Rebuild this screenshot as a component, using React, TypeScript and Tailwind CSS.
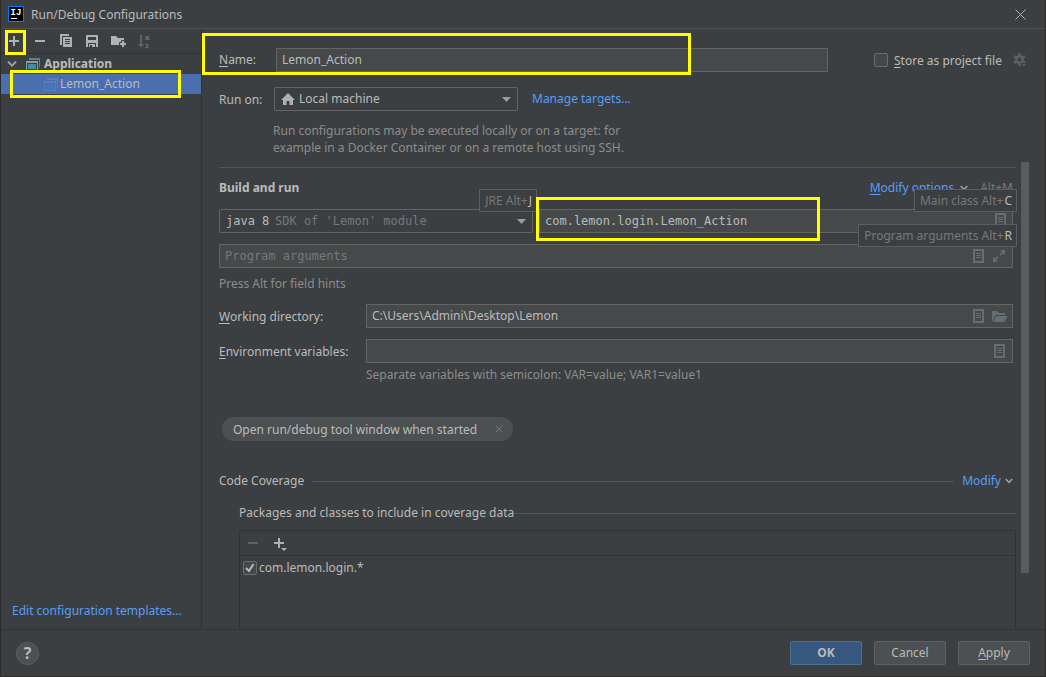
import type { ReactNode } from 'react'

const fieldClass =
  'h-6 w-full min-w-0 border border-[#646464] bg-[#45494a] px-[5px] pb-px text-[#bbbbbb] outline-none'
const linkClass = 'text-[#589df6] hover:underline'
const monoClass = "font-['DejaVu_Sans_Mono',monospace] text-xs"

function Mnemonic({ text }: { text: string }) {
  return (
    <span className="whitespace-nowrap">
      <span className="underline underline-offset-2">{text[0]}</span>
      {text.slice(1)}
    </span>
  )
}

function Highlight({ className }: { className: string }) {
  return <div className={`pointer-events-none absolute z-20 border-3 border-[#ffff00] ${className}`} />
}

function FieldHint({ label, hotkey }: { label: string; hotkey: string }) {
  return (
    <div className="pointer-events-none absolute -top-5 -right-1 z-10 flex h-[23px] items-center border border-[#5b5d5f] bg-[#3c3f41] pr-1 pl-[5px] whitespace-nowrap text-[#787878]">
      {label} Alt+<span className="ml-px text-[#bbbbbb]">{hotkey}</span>
    </div>
  )
}

function DocIcon() {
  return (
    <svg className="h-3.5 w-[11px]" viewBox="0 0 11 14" shapeRendering="crispEdges">
      <path fill="none" stroke="#646d72" strokeWidth="2" d="M1 1h9v12H1z" />
      <path fill="#646d72" d="M3 4h5v1H3zM3 6h5v1H3zM3 8h5v1H3z" />
    </svg>
  )
}

function ExpandIcon() {
  return (
    <svg className="h-3.5 w-3.5" viewBox="0 0 14 14">
      <path fill="#646d72" d="M8 1h5v5l-1.700-1.700L8.800 6.800 7.500 5.500 10 3zM1 13V8l1.700 1.700L5.200 7.200l1.300 1.300L4 11l2 2z" />
    </svg>
  )
}

function FolderIcon() {
  return (
    <svg className="h-3.5 w-4" viewBox="0 0 16 14">
      <path fill="#646d72" d="M0 2h5l2 2h6v2H3.500L1 12H0z" />
      <path fill="#646d72" d="M4 7h11.500L12.500 13H1.500z" />
    </svg>
  )
}

function WindowIcon({ dim }: { dim?: boolean }) {
  return (
    <svg className="h-[13px] w-3.5 shrink-0" viewBox="0 0 14 13" shapeRendering="crispEdges">
      <path fill={dim ? '#5f7db8' : '#6e7a80'} d="M3 0h11v10h-1V2H3z" />
      <path fill={dim ? '#5f7db8' : '#8d9aa2'} d="M0 3h12v10H0zM1 5v7h10V5z" fillRule="evenodd" />
      <path fill={dim ? '#3f78bf' : '#3e8ea8'} d="M2 6h8v5H2z" />
    </svg>
  )
}

function Chevron({ className }: { className?: string }) {
  return (
    <svg className={`shrink-0 ${className ?? 'size-2'}`} viewBox="0 0 8 8">
      <path fill="none" stroke="#9a9da0" strokeWidth="1.600" d="M.7 2 4 5.300 7.300 2" />
    </svg>
  )
}

function SelectArrow() {
  return (
    <svg className="pointer-events-none absolute top-[10px] right-[7px] h-[5px] w-[9px]" viewBox="0 0 9 5">
      <path fill="#9a9da0" d="M0 0h9L4.500 5z" />
    </svg>
  )
}

function ToolButton({ label, children }: { label: string; children: ReactNode }) {
  return (
    <button type="button" aria-label={label} className="flex size-4 items-center justify-center">
      <svg className="size-4" viewBox="0 0 16 16">
        {children}
      </svg>
    </button>
  )
}

function Sidebar() {
  return (
    <aside className="flex w-[201px] shrink-0 flex-col border-r border-[#323232]">
      <div className="relative flex h-[25px] items-center gap-[10px] border-b border-[#323232] pl-[5px]">
        <ToolButton label="Add">
          <path fill="#afb1b3" d="M7 3h2v4h4v2H9v4H7V9H3V7h4z" />
        </ToolButton>
        <ToolButton label="Remove">
          <path fill="#afb1b3" d="M3 7h10v2H3z" />
        </ToolButton>
        <ToolButton label="Copy">
          <path fill="#afb1b3" d="M2 1h9v2H4v9H2z" />
          <path fill="#afb1b3" fillRule="evenodd" d="M5 4h9v10H5zM7 6v1h5V6zM7 8v1h5V8zM7 10v1h5v-1z" />
        </ToolButton>
        <ToolButton label="Save">
          <path fill="#afb1b3" fillRule="evenodd" d="M2 2h12v12h-2v-4H4v4H2zM4 4v3h8V4zM5 11h6v3H8v-2H6v2H5z" />
        </ToolButton>
        <ToolButton label="New folder">
          <path fill="#afb1b3" d="M1 3h5l2 2h6v4h-3v3H1z" />
          <path fill="#afb1b3" stroke="#3c3f41" d="M11.500 7.500h3v2h2v3h-2v2h-3v-2h-2v-3h2z" />
        </ToolButton>
        <ToolButton label="Sort">
          <path fill="#5e6163" d="M4 2h2v9h2.500L5 14.500 1.500 11H4z" />
          <text x="9" y="7" fontFamily="Liberation Sans" fontSize="8" fontWeight="bold" fill="#6e7173">a</text>
          <text x="9" y="15" fontFamily="Liberation Sans" fontSize="8" fontWeight="bold" fill="#6e7173">z</text>
        </ToolButton>
        <Highlight className="top-px left-1 h-[25px] w-[21px]" />
      </div>

      {/* Configuration tree */}
      <div className="flex h-5 items-center pl-[6px] font-bold">
        <Chevron className="mr-[9px] size-[10px]" />
        <WindowIcon />
        <span className="ml-1">Application</span>
      </div>
      <div className="relative flex h-5 items-center bg-[#4b6eaf] pl-[43px]">
        <WindowIcon dim />
        <span className="ml-0.5">Lemon_Action</span>
        <Highlight className="-top-1 left-[9px] h-7 w-[171px]" />
      </div>

      <a href="#templates" className={`mt-auto mb-2 ml-[11px] leading-5 whitespace-nowrap ${linkClass}`}>
        Edit configuration templates...
      </a>
    </aside>
  )
}

function ConfigHeader() {
  return (
    <div className="pt-[19px] pr-[18px] pl-[17px]">
      <div className="relative flex h-6 items-center">
        <label htmlFor="name" className="w-[57px] shrink-0">
          <Mnemonic text="Name:" />
        </label>
        <input id="name" className={fieldClass} defaultValue="Lemon_Action" />
        <div className="ml-[46px] flex w-[153px] shrink-0 items-center">
          <input
            id="store"
            type="checkbox"
            className="size-3.5 shrink-0 appearance-none rounded-xs border border-[#6b6b6b] bg-[#43494a]"
          />
          <label htmlFor="store" className="ml-1.5 pt-0.5">
            <Mnemonic text="Store as project file" />
          </label>
          <button type="button" aria-label="Storage settings" className="ml-auto">
            <svg className="size-3.5" viewBox="0 0 14 14">
              <circle cx="6.500" cy="6.500" r="3.200" fill="none" stroke="#5e6163" strokeWidth="2.600" />
              <path stroke="#5e6163" strokeWidth="2.600" d="M6.500 0v2.500M6.500 10.500V13M.9 3.200l2.100 1.300M10 8.500l2.100 1.300M.9 9.800 3 8.500M10 4.500l2.100-1.300" />
              <path fill="#5e6163" stroke="#3c3f41" d="M8 10.500h6L11 14z" />
            </svg>
          </button>
        </div>
        <Highlight className="-top-[15px] -left-[17px] h-[42px] w-[489px]" />
      </div>

      <div className="mt-[15px] flex h-6 items-center">
        <label htmlFor="run-on" className="w-[55px] shrink-0 pt-0.5 whitespace-nowrap">
          Run on:
        </label>
        <div className="relative w-[244px]">
          <select
            id="run-on"
            className="block h-6 w-full appearance-none rounded-xs border border-[#646464] bg-[#3c3f41] pl-6 outline-none"
          >
            <option>Local machine</option>
          </select>
          <svg className="pointer-events-none absolute top-[6px] left-[7px] h-3 w-3.5" viewBox="0 0 14 12">
            <path fill="#afb1b3" d="M7 0l7 7h-2v5H8.500V8h-3v4H2V7H0z" />
          </svg>
          <SelectArrow />
        </div>
        <a href="#targets" className={`ml-[14px] ${linkClass}`}>
          Manage targets...
        </a>
      </div>
      <p className="mt-[11px] ml-[54px] w-[380px] leading-[17px] text-[#8c8c8c]">
        Run configurations may be executed locally or on a target: for
        <br />
        example in a Docker Container or on a remote host using SSH.
      </p>
    </div>
  )
}

function BuildAndRun() {
  return (
    <section className="mr-[3px]">
      <div className="mt-2 flex h-6 items-center">
        <h2 className="font-bold">Build and run</h2>
        <a href="#options" className={`ml-auto ${linkClass}`}>
          <Mnemonic text="Modify options" />
        </a>
        <Chevron className="mr-3 ml-1.5 size-2" />
        <span className="text-[#787878]">Alt+M</span>
      </div>

      <div className="mt-[9px] flex gap-[6px]">
        <div className="relative w-[314px] shrink-0">
          <select
            aria-label="JRE"
            className={`block h-6 w-full appearance-none rounded-xs border border-[#646464] bg-[#3c3f41] pl-1.5 outline-none ${monoClass}`}
          >
            <option>java 8</option>
          </select>
          <span className={`pointer-events-none absolute inset-y-0 left-14 flex items-center text-[#787878] ${monoClass}`}>
            SDK of 'Lemon' module
          </span>
          <SelectArrow />
          <FieldHint label="JRE" hotkey="J" />
        </div>
        <div className="relative flex-1">
          <input aria-label="Main class" className={`block ${fieldClass} ${monoClass} text-[#a9b7c6]`} defaultValue="com.lemon.login.Lemon_Action" />
          <span className="absolute top-1 right-[7px]">
            <DocIcon />
          </span>
          <FieldHint label="Main class" hotkey="C" />
          <Highlight className="-top-3 -left-[3px] h-11 w-[284px]" />
        </div>
      </div>

      <div className="relative mt-[11px]">
        <input
          aria-label="Program arguments"
          placeholder="Program arguments"
          className={`block ${fieldClass} ${monoClass} placeholder:text-[#787878]`}
        />
        <div className="absolute top-[5px] right-[7px] flex gap-2">
          <DocIcon />
          <ExpandIcon />
        </div>
        <FieldHint label="Program arguments" hotkey="R" />
      </div>
      <p className="mt-[6px] leading-5 text-[#8c8c8c]">Press Alt for field hints</p>

      <div className="mt-[10px] flex items-center">
        <label htmlFor="workdir" className="w-[147px] shrink-0 pt-0.5">
          <Mnemonic text="Working directory:" />
        </label>
        <div className="relative flex-1">
          <input id="workdir" className={`block ${fieldClass}`} defaultValue="C:\Users\Admini\Desktop\Lemon" />
          <div className="absolute top-[5px] right-[5px] flex gap-2">
            <DocIcon />
            <FolderIcon />
          </div>
        </div>
      </div>
      <div className="mt-[11px] flex items-center">
        <label htmlFor="env" className="w-[147px] shrink-0 pt-0.5">
          <Mnemonic text="Environment variables:" />
        </label>
        <div className="relative flex-1">
          <input id="env" className={`block ${fieldClass}`} />
          <span className="absolute top-[5px] right-2">
            <DocIcon />
          </span>
        </div>
      </div>
      <p className="mt-0.5 ml-[147px] leading-5 text-[#8c8c8c]">
        Separate variables with semicolon: VAR=value; VAR1=value1
      </p>

      <div className="mt-8 ml-[3px] flex h-6 w-[291px] items-center rounded-full bg-[#4c5052] pr-[10px] pl-[11px] whitespace-nowrap">
        <span className="pt-0.5">Open run/debug tool window when started</span>
        <button type="button" aria-label="Remove option" className="ml-auto">
          <svg className="size-2" viewBox="0 0 8 8">
            <path stroke="#75797b" d="M.5.5l7 7M7.500.5l-7 7" />
          </svg>
        </button>
      </div>
    </section>
  )
}

function CodeCoverage() {
  return (
    <section className="flex min-h-0 flex-1 flex-col">
      <div className="mt-[30px] mr-[3px] flex h-5 items-center">
        <h2>Code Coverage</h2>
        <div className="mx-2 h-px flex-1 bg-[#515557]" />
        <a href="#modify" className={linkClass}>
          Modify
        </a>
        <Chevron className="ml-1 size-2" />
      </div>
      <div className="mt-3 ml-5 flex h-5 items-center">
        <h3>Packages and classes to include in coverage data</h3>
        <div className="h-px flex-1 bg-[#515557]" />
      </div>
      <div className="mt-[7px] ml-5 flex-1 border border-b-0 border-[#323232]">
        <div className="flex h-[25px] items-center gap-[11px] border-b border-[#323232] pl-[5px]">
          <ToolButton label="Remove pattern">
            <path fill="#5e6163" d="M3 7h10v2H3z" />
          </ToolButton>
          <ToolButton label="Add pattern">
            <path fill="#afb1b3" d="M6 3h2v4h4v2H8v4H6V9H2V7h4z" />
            <path fill="#afb1b3" d="M9 13h6l-3 3z" />
          </ToolButton>
        </div>
        <label className="flex h-6 items-center pl-[3px]">
          <span className="relative flex">
            <input
              type="checkbox"
              defaultChecked
              className="peer size-3.5 appearance-none rounded-xs border border-[#6b6b6b] bg-[#43494a]"
            />
            <svg className="pointer-events-none absolute inset-0 hidden size-3.5 peer-checked:block" viewBox="0 0 14 14">
              <path fill="none" stroke="#bbbbbb" strokeWidth="2" d="M3 7l3 3 4.500-7" />
            </svg>
          </span>
          <span className="ml-0.5">com.lemon.login.*</span>
        </label>
      </div>
    </section>
  )
}

export default function App() {
  return (
    <div className="flex h-screen flex-col overflow-hidden border-x border-b border-[#2b2b2b] bg-[#3c3f41] font-['Noto_Sans',sans-serif] text-xs leading-5 text-[#bbbbbb]">
      <header className="flex h-[29px] shrink-0 items-center border-b border-[#515151] pr-[19px] pl-[7px]">
        <svg className="size-4" viewBox="0 0 16 16">
          <path fill="#000" stroke="#087cfa" d="M.5.5h15v15H.5z" />
          <text x="2.500" y="9" fontFamily="Liberation Mono" fontWeight="bold" fontSize="9" fill="#fff">IJ</text>
          <path fill="#fff" d="M3 12h6v1H3z" />
        </svg>
        <h1 className="ml-[7px] pt-0.5">Run/Debug Configurations</h1>
        <button type="button" aria-label="Close" className="ml-auto">
          <svg className="size-[11px]" viewBox="0 0 11 11">
            <path stroke="#afb1b3" d="M.5.5l10 10M10.500.5l-10 10" />
          </svg>
        </button>
      </header>

      <div className="flex min-h-0 flex-1">
        <Sidebar />
        <main className="flex min-w-0 flex-1 flex-col">
          <ConfigHeader />
          <div className="mt-[6px] flex min-h-0 flex-1 pr-4">
            <div className="mr-[5px] flex min-w-0 flex-1 flex-col pl-[17px]">
              <div className="mt-[5px] h-px shrink-0 bg-[#515557]" />
              <BuildAndRun />
              <CodeCoverage />
            </div>
            <div className="h-[88%] w-2 shrink-0 bg-[#5a5b5c]" />
          </div>
        </main>
      </div>

      <footer className="flex h-[47px] shrink-0 items-center gap-3 border-t border-[#323232] pr-[15px] pl-[15px]">
        <button
          type="button"
          aria-label="Help"
          className="mr-auto flex size-[23px] items-center justify-center rounded-full border border-[#5e6060] bg-[#4c5052] text-base font-bold"
        >
          ?
        </button>
        <button type="button" className="h-6 w-18 rounded-xs border border-[#4c708c] bg-[#365880] leading-[22px] font-bold">
          OK
        </button>
        <button type="button" className="h-6 w-18 rounded-xs border border-[#5e6060] bg-[#4c5052] leading-[22px]">
          Cancel
        </button>
        <button type="button" className="h-6 w-18 rounded-xs border border-[#5e6060] bg-[#4c5052] leading-[22px]">
          <Mnemonic text="Apply" />
        </button>
      </footer>
    </div>
  )
}
